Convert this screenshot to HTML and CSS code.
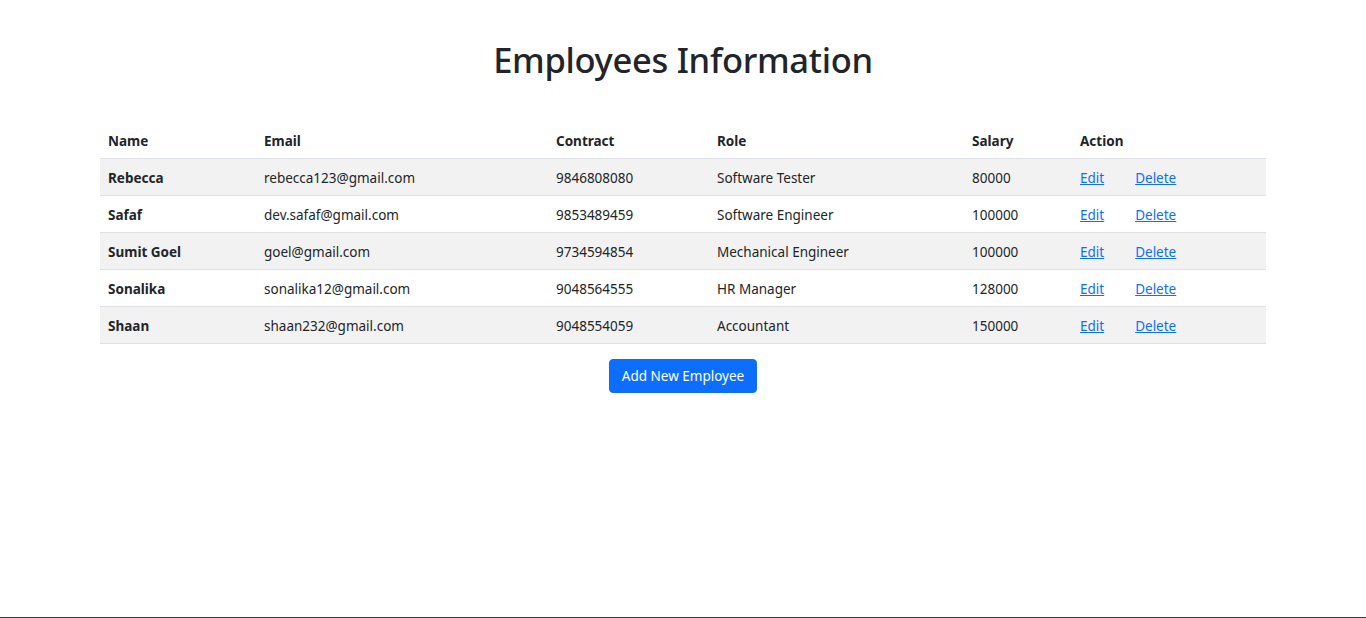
FILE: index.html
```html
<!DOCTYPE html>
<html lang="en">
<head>
<meta charset="utf-8">
<title>Employees Information</title>
<link rel="stylesheet" href="styles.css">
</head>
<body>
<main class="page">
  <h1 class="title">Employees Information</h1>
  <table class="emp-table">
    <thead>
      <tr>
        <th class="c-name">Name</th>
        <th class="c-email">Email</th>
        <th class="c-contract">Contract</th>
        <th class="c-role">Role</th>
        <th class="c-salary">Salary</th>
        <th class="c-action">Action</th>
      </tr>
    </thead>
    <tbody>
      <tr>
        <th>Rebecca</th><td>rebecca123@gmail.com</td><td>9846808080</td><td>Software Tester</td><td>80000</td>
        <td><a href="#" class="act edit">Edit</a><a href="#" class="act">Delete</a></td>
      </tr>
      <tr>
        <th>Safaf</th><td>dev.safaf@gmail.com</td><td>9853489459</td><td>Software Engineer</td><td>100000</td>
        <td><a href="#" class="act edit">Edit</a><a href="#" class="act">Delete</a></td>
      </tr>
      <tr>
        <th>Sumit Goel</th><td>goel@gmail.com</td><td>9734594854</td><td>Mechanical Engineer</td><td>100000</td>
        <td><a href="#" class="act edit">Edit</a><a href="#" class="act">Delete</a></td>
      </tr>
      <tr>
        <th>Sonalika</th><td>sonalika12@gmail.com</td><td>9048564555</td><td>HR Manager</td><td>128000</td>
        <td><a href="#" class="act edit">Edit</a><a href="#" class="act">Delete</a></td>
      </tr>
      <tr>
        <th>Shaan</th><td>shaan232@gmail.com</td><td>9048554059</td><td>Accountant</td><td>150000</td>
        <td><a href="#" class="act edit">Edit</a><a href="#" class="act">Delete</a></td>
      </tr>
    </tbody>
  </table>
  <div class="actions">
    <button class="btn-primary" type="button">Add New Employee</button>
  </div>
</main>
</body>
</html>
```

FILE: styles.css
```css
html, body {
  height: 100%;
}
* { box-sizing: border-box; }
body {
  margin: 0;
  font-family: "Noto Sans", "Open Sans", sans-serif;
  font-size: 13.5px;
  color: #212529;
  background: #fff;
  border-bottom: 1px solid #3c3c3c;
}
.page {
  width: 1166px;
  margin: 0 auto;
  padding-top: 37px;
}
.title {
  margin: 0 0 39px;
  text-align: center;
  font-size: 34.5px;
  font-weight: 500;
  letter-spacing: -0.3px;
  line-height: 46px;
}
.emp-table {
  width: 100%;
  border-collapse: collapse;
  table-layout: fixed;
}
.emp-table th,
.emp-table td {
  padding: 9px 8px 7px;
  line-height: 20px;
  text-align: left;
  border-bottom: 1px solid #dee2e6;
  vertical-align: top;
}
.emp-table th { font-weight: 700; }
.emp-table td { font-weight: 400; }
.emp-table tbody tr:nth-child(odd) { background: #f2f2f2; }
.c-name { width: 156px; }
.c-email { width: 292px; }
.c-contract { width: 161px; }
.c-role { width: 255px; }
.c-salary { width: 108px; }
.c-action { width: 194px; }
.act {
  color: #0d6efd;
  text-decoration: underline;
}
.act.edit { margin-right: 31px; }
.actions {
  display: flex;
  justify-content: center;
  padding-top: 15px;
}
.btn-primary {
  font-family: inherit;
  font-size: 13.5px;
  line-height: 20px;
  height: 34px;
  padding: 6px 12px;
  border: 1px solid #0d6efd;
  background: #0d6efd;
  color: #fff;
  border-radius: 4px;
}
```
